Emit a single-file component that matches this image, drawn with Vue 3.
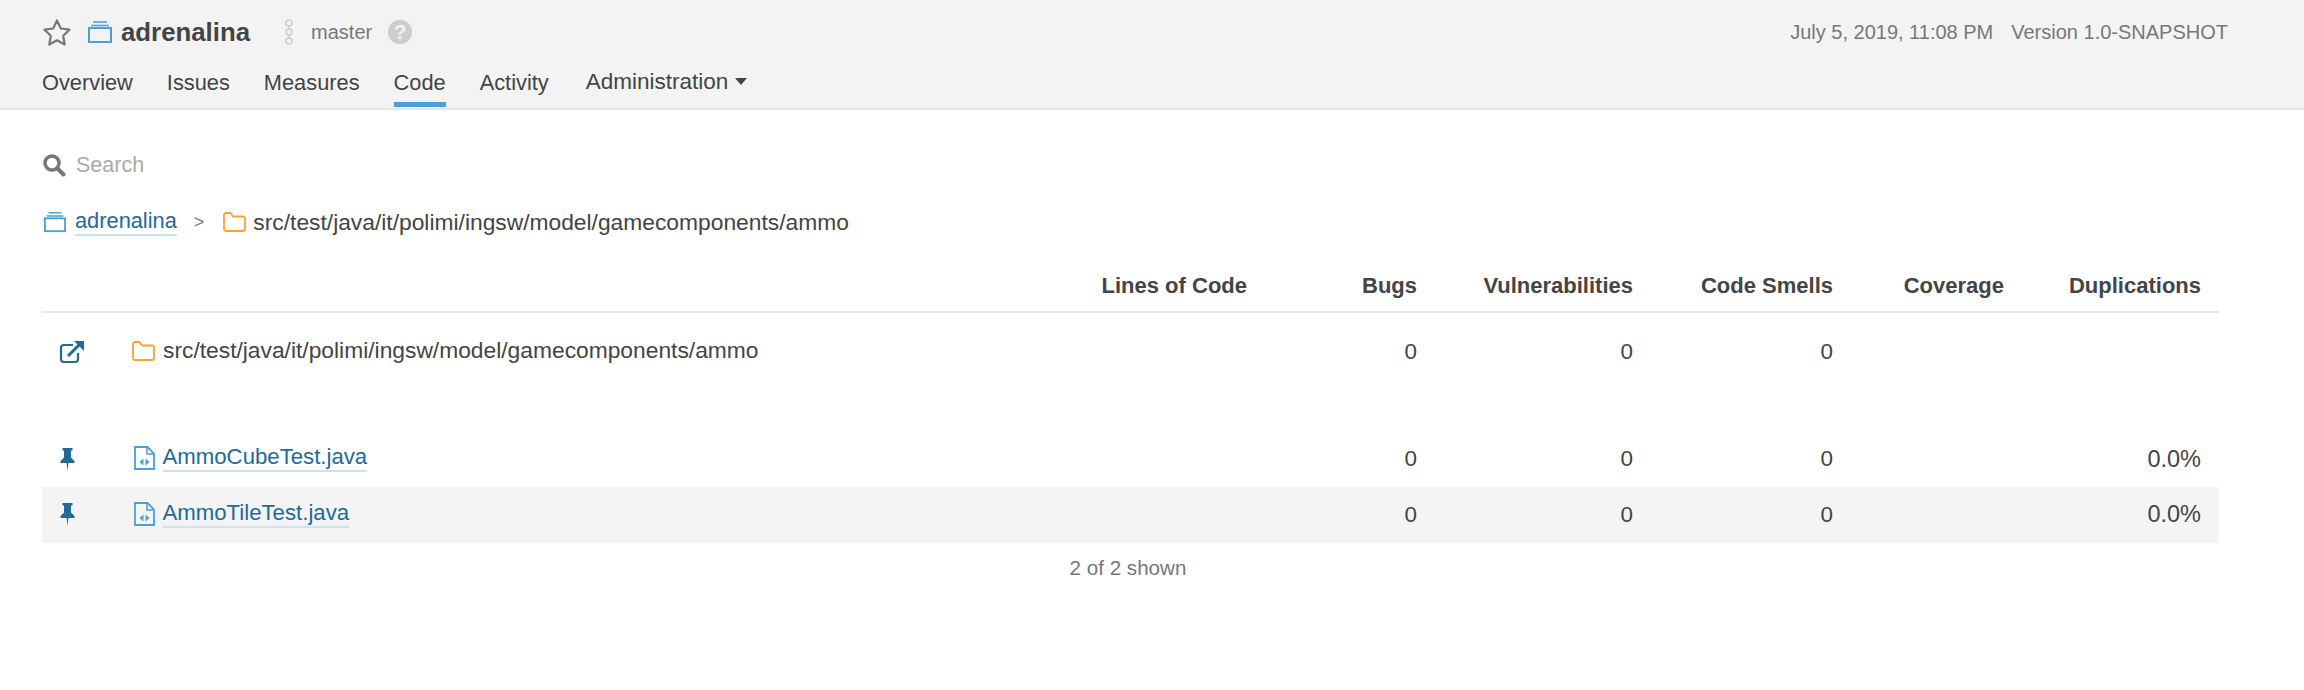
<script setup>
const tabs = ['Overview', 'Issues', 'Measures', 'Code', 'Activity']
const path = 'src/test/java/it/polimi/ingsw/model/gamecomponents/ammo'
const files = [
  { name: 'AmmoCubeTest.java' },
  { name: 'AmmoTileTest.java' }
]
</script>

<template>
  <div class="page">
    <header class="bar">
      <div class="top">
        <svg class="star" width="30" height="28" viewBox="0 0 30 28">
          <path d="M15 2.500l3.800 8 8.700 1.200-6.300 6.100 1.500 8.700-7.700-4.200-7.700 4.200 1.500-8.700-6.300-6.100 8.700-1.200z" fill="none" stroke="#777" stroke-width="2.200" stroke-linejoin="round" />
        </svg>
        <svg class="qualifier" width="24" height="22" viewBox="0 0 24 22">
          <path d="M5 1h14M3 4.500h18" fill="none" stroke="#4b9fd5" stroke-width="1.600" />
          <rect x="1" y="7" width="22" height="14" fill="none" stroke="#4b9fd5" stroke-width="2" />
        </svg>
        <span class="title">adrenalina</span>
        <svg class="branch" width="10" height="26" viewBox="0 0 10 26">
          <path d="M5 7v3M5 16v3" stroke="#ccc" stroke-width="1.500" />
          <g fill="none" stroke="#ccc" stroke-width="1.500">
            <circle cx="5" cy="4" r="3" />
            <circle cx="5" cy="13" r="3" />
            <circle cx="5" cy="22" r="3" />
          </g>
        </svg>
        <span class="branch-name">master</span>
        <span class="help">?</span>
        <div class="meta">
          <span>July 5, 2019, 11:08 PM</span>
          <span>Version 1.0-SNAPSHOT</span>
        </div>
      </div>
      <nav class="tabs">
        <a v-for="t in tabs" :key="t" class="tab" :class="{ active: t === 'Code' }">{{ t }}</a>
        <a class="tab admin">Administration <i class="caret"></i></a>
      </nav>
    </header>

    <main class="content">
      <div class="search">
        <svg width="24" height="24" viewBox="0 0 24 24">
          <circle cx="10" cy="10" r="7" fill="none" stroke="#777" stroke-width="3.500" />
          <path d="M15.500 15.500l6 6" stroke="#777" stroke-width="4" stroke-linecap="round" />
        </svg>
        <span>Search</span>
      </div>

      <div class="crumbs">
        <svg width="22" height="22" viewBox="0 0 24 22">
          <path d="M5 1h14M3 4.500h18" fill="none" stroke="#4b9fd5" stroke-width="1.600" />
          <rect x="1" y="7" width="22" height="14" fill="none" stroke="#4b9fd5" stroke-width="2" />
        </svg>
        <a class="link">adrenalina</a>
        <span class="sep">&gt;</span>
        <svg class="folder" width="23" height="20" viewBox="0 0 23 20">
          <path d="M1 3a2 2 0 0 1 2-2h4.500l2.500 3.500h10a2 2 0 0 1 2 2V17a2 2 0 0 1-2 2H3a2 2 0 0 1-2-2z" fill="none" stroke="#ffa033" stroke-width="1.800" stroke-linejoin="round" />
        </svg>
        <span class="path">{{ path }}</span>
      </div>

      <table class="measures">
        <colgroup>
          <col class="c-icon" /><col class="c-name" /><col class="c-loc" /><col class="c-bugs" />
          <col class="c-vuln" /><col class="c-smells" /><col class="c-cov" /><col class="c-dup" />
        </colgroup>
        <thead>
          <tr>
            <th></th><th></th>
            <th>Lines of Code</th><th>Bugs</th><th>Vulnerabilities</th><th>Code Smells</th><th>Coverage</th><th>Duplications</th>
          </tr>
        </thead>
        <tbody>
          <tr class="base">
            <td class="icon-cell">
              <svg width="26" height="24" viewBox="0 0 26 24">
                <path d="M14 5H5a3 3 0 0 0-3 3v11a3 3 0 0 0 3 3h11a3 3 0 0 0 3-3v-6" fill="none" stroke="#236a97" stroke-width="2.200" />
                <path d="M9 16L20 5" stroke="#236a97" stroke-width="3" />
                <path d="M15 1h10v10z" fill="#236a97" />
              </svg>
            </td>
            <td class="name">
              <span class="name-in base-in">
                <svg width="23" height="20" viewBox="0 0 23 20">
                  <path d="M1 3a2 2 0 0 1 2-2h4.500l2.500 3.500h10a2 2 0 0 1 2 2V17a2 2 0 0 1-2 2H3a2 2 0 0 1-2-2z" fill="none" stroke="#ffa033" stroke-width="1.800" stroke-linejoin="round" />
                </svg>
                <span class="path">{{ path }}</span>
              </span>
            </td>
            <td></td><td>0</td><td>0</td><td>0</td><td></td><td></td>
          </tr>
          <tr class="spacer"><td colspan="8"></td></tr>
          <tr v-for="(f, i) in files" :key="f.name" class="file" :class="{ odd: i === 1 }">
            <td class="icon-cell pin-cell">
              <svg width="15" height="23" viewBox="0 0 15 23">
                <path d="M2.500 0h10v2.500h-1.500V9.500l3.500 3.500v2H8.400l-.9 8-.9-8H.5v-2L4 9.500V2.500H2.500z" fill="#236a97" />
              </svg>
            </td>
            <td class="name">
              <span class="name-in file-in">
                <svg width="21" height="24" viewBox="0 0 21 24">
                  <path d="M1 1h12.500L20 7.500V23H1z" fill="none" stroke="#4b9fd5" stroke-width="1.800" />
                  <path d="M13 1v7h7" fill="none" stroke="#4b9fd5" stroke-width="1.500" />
                  <path d="M9.500 12.500v7l-4-3.500zM11.500 12.500v7l4-3.500z" fill="#4b9fd5" />
                </svg>
                <a class="link">{{ f.name }}</a>
              </span>
            </td>
            <td></td><td>0</td><td>0</td><td>0</td><td></td><td>0.0%</td>
          </tr>
        </tbody>
      </table>
      <div class="shown">2 of 2 shown</div>
    </main>
  </div>
</template>

<style>
body {
  background: #fff;
}
</style>

<style scoped>
.page {
  font-family: "Liberation Sans", Arial, sans-serif;
  font-size: 21.800px;
  color: #444;
  height: 690px;
  overflow: hidden;
}
.bar {
  background: #f3f3f3;
  border-bottom: 2px solid #e6e6e6;
  height: 108px;
  padding: 0 76px 0 42px;
  display: flex;
  flex-direction: column;
  justify-content: space-between;
}
.top {
  display: flex;
  align-items: center;
  height: 32px;
  margin-top: 16px;
}
.star {
  margin-right: 16px;
}
.qualifier {
  margin-right: 9px;
}
.title {
  font-weight: bold;
  font-size: 25.800px;
}
.branch {
  margin-left: 34px;
}
.branch-name {
  margin-left: 17px;
  font-size: 20px;
  color: #777;
}
.help {
  margin-left: 16px;
  width: 24px;
  height: 24px;
  border-radius: 50%;
  background: #cdcdcd;
  color: #f3f3f3;
  font-weight: bold;
  font-size: 21px;
  line-height: 24px;
  text-align: center;
}
.meta {
  margin-left: auto;
  display: flex;
  gap: 18px;
  font-size: 20px;
  color: #777;
}
.tabs {
  display: flex;
  gap: 34px;
  margin-bottom: 1px;
}
.tab {
  padding-bottom: 6.500px;
  border-bottom: 5px solid transparent;
  line-height: 26px;
}
.tab.active {
  border-bottom-color: #4b9fd5;
}
.admin {
  display: flex;
  align-items: center;
  gap: 7px;
  margin-top: -2px;
  margin-left: 3px;
  font-size: 22.500px;
}
.caret {
  width: 0;
  height: 0;
  border-left: 6px solid transparent;
  border-right: 6px solid transparent;
  border-top: 7px solid #444;
}
.content {
  padding: 0 85px 0 42px;
}
.search {
  display: flex;
  align-items: center;
  gap: 10px;
  margin-top: 43px;
  height: 24px;
  color: #aaa;
  font-size: 21.500px;
}
.crumbs {
  display: flex;
  align-items: center;
  margin-top: 33px;
  height: 24px;
}
.crumbs > svg:first-child {
  margin-left: 2px;
  margin-right: 9px;
}
.link {
  color: #236a97;
  border-bottom: 2px solid #cae3f2;
}
.path {
  font-size: 22.800px;
}
.sep {
  margin: 0 19px 0 17px;
  color: #777;
  font-size: 18px;
}
.folder {
  margin-right: 7px;
}
.measures {
  width: 2177px;
  table-layout: fixed;
  border-collapse: collapse;
  margin-top: 30px;
}
.c-icon { width: 90px; }
.c-name { width: 908px; }
.c-loc { width: 207px; }
.c-bugs { width: 170px; }
.c-vuln { width: 216px; }
.c-smells { width: 200px; }
.c-cov { width: 171px; }
.c-dup { width: 215px; }
th {
  height: 44px;
  padding: 0 0 3px;
  text-align: right;
  font-weight: bold;
  font-size: 22px;
  border-bottom: 2px solid #e6e6e6;
  white-space: nowrap;
}
th:last-child,
td:last-child {
  padding-right: 18px;
}
td {
  padding: 0;
  text-align: right;
  font-size: 22.500px;
}
td:last-child {
  font-size: 23.500px;
}
.base {
  height: 79px;
}
.spacer {
  height: 40.500px;
}
.file {
  height: 55.500px;
}
.odd {
  background: #f4f4f4;
}
.icon-cell {
  text-align: center;
  padding-right: 30px;
}
.pin-cell {
  padding-right: 40px;
}
.icon-cell svg {
  display: block;
  margin: 0 auto;
}
.name {
  text-align: left;
}
.name-in {
  display: flex;
  align-items: center;
  gap: 8px;
  position: relative;
  top: -1px;
}
.base-in {
  top: -1.500px;
}
.file-in svg {
  margin-left: 2px;
}
.file-in {
  gap: 7.500px;
}
.file .link {
  font-size: 22.200px;
}
.shown {
  text-align: center;
  width: 2172px;
  margin-top: 13.500px;
  line-height: 24px;
  font-size: 20.600px;
  color: #777;
}
</style>
